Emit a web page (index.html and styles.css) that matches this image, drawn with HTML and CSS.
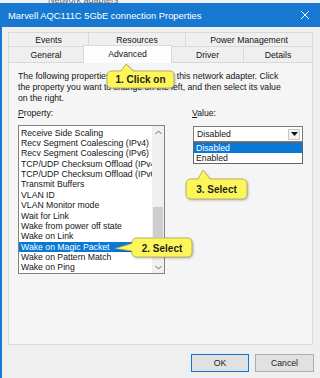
FILE: index.html
```html
<!DOCTYPE html>
<html lang="en">
  <head>
    <meta charset="UTF-8" />
    <title>Marvell AQC111C 5GbE connection Properties</title>
    <link rel="stylesheet" href="styles.css">
  </head>
  <body>
    <div class="backdrop"><span class="behind-text">Network adapters</span></div>
    <div class="window">
      <div class="titlebar">
        <span class="title">Marvell AQC111C 5GbE connection Properties</span>
        <svg class="close" width="10" height="10" viewBox="0 0 10 10">
          <path d="M1 1L9 9M9 1L1 9" stroke="#fff" stroke-width="1" fill="none" />
        </svg>
      </div>
      <div class="client">
        <div class="tabs">
          <div class="tab-row">
            <div class="tab t-events">Events</div>
            <div class="tab t-resources">Resources</div>
            <div class="tab t-power last">Power Management</div>
          </div>
          <div class="tab-row">
            <div class="tab t-general">General</div>
            <div class="tab t-advanced active">Advanced</div>
            <div class="tab t-driver">Driver</div>
            <div class="tab t-details last">Details</div>
          </div>
        </div>
        <div class="panel">
          <p class="desc">
            The following properties are available for this network adapter. Click<br />
            the property you want to change on the left, and then select its value<br />
            on the right.
          </p>
          <div class="fields">
            <div class="field prop">
              <div class="label"><u>P</u>roperty:</div>
              <div class="listbox">
                <ul class="items">
                  <li>Receive Side Scaling</li>
                  <li>Recv Segment Coalescing (IPv4)</li>
                  <li>Recv Segment Coalescing (IPv6)</li>
                  <li>TCP/UDP Checksum Offload (IPv4)</li>
                  <li>TCP/UDP Checksum Offload (IPv6)</li>
                  <li>Transmit Buffers</li>
                  <li>VLAN ID</li>
                  <li>VLAN Monitor mode</li>
                  <li>Wait for Link</li>
                  <li>Wake from power off state</li>
                  <li>Wake on Link</li>
                  <li class="selected">Wake on Magic Packet</li>
                  <li>Wake on Pattern Match</li>
                  <li>Wake on Ping</li>
                </ul>
                <div class="scrollbar">
                  <div class="arrow">
                    <svg width="7" height="5" viewBox="0 0 7 5"><path d="M0.5 4L3.5 1L6.5 4" stroke="#6d6d6d" fill="none" /></svg>
                  </div>
                  <div class="track"><div class="thumb"></div></div>
                  <div class="arrow">
                    <svg width="7" height="5" viewBox="0 0 7 5"><path d="M0.5 1L3.5 4L6.5 1" stroke="#6d6d6d" fill="none" /></svg>
                  </div>
                </div>
              </div>
            </div>
            <div class="field value">
              <div class="label"><u>V</u>alue:</div>
              <div class="combo">
                <span>Disabled</span>
                <span class="drop-btn">
                  <svg width="7" height="4" viewBox="0 0 7 4"><path d="M0 0H7L3.5 4Z" fill="#111" /></svg>
                </span>
              </div>
              <ul class="droplist">
                <li class="selected">Disabled</li>
                <li>Enabled</li>
              </ul>
            </div>
          </div>
        </div>
        <div class="buttons">
          <button class="btn default">OK</button>
          <button class="btn">Cancel</button>
        </div>
      </div>
    </div>

    <!-- tutorial callouts drawn over the dialog -->
    <svg class="callouts" width="320" height="378" viewBox="0 0 320 378">
      <g class="bubble">
        <path d="M112 71H121L126 64L133 71H169Q174 71 174 76V83Q174 88 169 88H112Q107 88 107 83V76Q107 71 112 71Z" />
        <text x="140.5" y="83.2">1. Click on</text>
      </g>
      <g class="bubble">
        <path d="M191 179H198L203 170L210 179H242Q247 179 247 184V194Q247 199 242 199H191Q186 199 186 194V184Q186 179 191 179Z" />
        <text x="216.5" y="193">3. Select</text>
      </g>
      <g class="bubble">
        <path d="M137 238H187Q192 238 192 243V252Q192 257 187 257H137Q132 257 132 252V251L115 248.5L132 243.5V243Q132 238 137 238Z" />
        <text x="162" y="251.5">2. Select</text>
      </g>
    </svg>
  </body>
</html>
```

FILE: styles.css
```css
* {
  box-sizing: border-box;
}

body {
  margin: 0;
  width: 320px;
  height: 378px;
  overflow: hidden;
  position: relative;
  font-family: "Liberation Sans", Arial, sans-serif;
  font-size: 8.7px;
  color: #141414;
  background-color: #efefef;
}

.backdrop {
  height: 3px;
  overflow: hidden;
  background-color: #f3f3f3;
  padding-left: 48px;
}

.behind-text {
  display: block;
  font-size: 9px;
  line-height: 6px;
  margin-top: -3px;
  color: #666;
}

.window {
  height: 375px;
  border-left: 2px solid #1878d0;
}

.titlebar {
  height: 24px;
  background-color: #1778d2;
  color: #ffffff;
  display: flex;
  align-items: center;
  justify-content: space-between;
  padding: 0 10px 0 6px;
  font-size: 9.4px;
}

.client {
  padding: 5px 7px 0 6px;
}

/* tabs */
.tab-row {
  display: flex;
  height: 14px;
}

.tab-row + .tab-row {
  height: 16px;
}

.tab {
  border-top: 1px solid #d9d9d9;
  border-left: 1px solid #d9d9d9;
  background-color: #efefef;
  display: flex;
  align-items: center;
  justify-content: center;
}

.tab.last {
  border-right: 1px solid #d9d9d9;
}

.t-events { width: 80px; }
.t-resources { width: 97px; }
.t-power { width: 128px; }
.t-general { width: 75px; }
.t-advanced { width: 89px; }
.t-driver { width: 71px; }
.t-details { width: 70px; }

.tab.active {
  background-color: #fdfdfd;
  border-right: 1px solid #d9d9d9;
  margin-top: -1px;
  height: 18px;
  position: relative;
  z-index: 1;
  padding-bottom: 2px;
}

.tab.active + .tab {
  border-left: none;
}

/* tab page */
.panel {
  height: 283px;
  border: 1px solid #d9d9d9;
  background-color: #f5f5f5;
  padding: 8px 9px 0 9px;
}

.desc {
  margin: 0;
  line-height: 11px;
}

.fields {
  display: flex;
  margin-top: 4px;
}

.label {
  line-height: 11px;
}

.prop {
  width: 147px;
}

.value {
  width: 111px;
  margin-left: 27px;
}

.listbox {
  margin-top: 6px;
  height: 149px;
  border: 1px solid #828282;
  background-color: #ffffff;
  display: flex;
}

.items {
  flex: 1;
  min-width: 0;
  margin: 0;
  padding: 1.5px 0 0 0;
  list-style: none;
  overflow: hidden;
}

.items li {
  height: 10.38px;
  line-height: 10.38px;
  padding-left: 2px;
  white-space: nowrap;
}

.items li.selected,
.droplist li.selected {
  background-color: #0a78d7;
  color: #ffffff;
}

.scrollbar {
  width: 12px;
  background-color: #f0f0f0;
  display: flex;
  flex-direction: column;
}

.arrow {
  height: 12px;
  display: flex;
  align-items: center;
  justify-content: center;
}

.track {
  flex: 1;
}

.thumb {
  margin: 69px 1px 0 1px;
  height: 30px;
  background-color: #cdcdcd;
}

.combo {
  margin: 7px 0 0 1px;
  height: 16px;
  border: 1px solid #7a7a7a;
  background-color: #ffffff;
  display: flex;
  align-items: center;
  justify-content: space-between;
  padding: 0 2px 0 3px;
}

.drop-btn {
  width: 12px;
  height: 11px;
  border: 1px solid #c6c6c6;
  background-color: #f4f4f4;
  display: flex;
  align-items: center;
  justify-content: center;
}

.droplist {
  margin: 0 0 0 1px;
  padding: 0;
  list-style: none;
  border: 1px solid #646464;
  background-color: #ffffff;
}

.droplist li {
  height: 10px;
  line-height: 10px;
  padding-left: 2px;
}

/* dialog buttons */
.buttons {
  display: flex;
  justify-content: flex-end;
  gap: 6px;
  margin: 9px -1px 0 0;
}

.btn {
  width: 59px;
  height: 18px;
  padding: 0;
  font-family: inherit;
  font-size: 8.7px;
  color: #1b1b1b;
  background-color: #e1e1e1;
  border: 1px solid #adadad;
}

.btn.default {
  width: 58px;
  border-color: #0a78d7;
}

/* callouts */
.callouts {
  position: absolute;
  left: 0;
  top: 0;
  pointer-events: none;
}

.bubble path {
  fill: #fdf65a;
  stroke: #aaa55a;
  stroke-width: 0.8;
  filter: drop-shadow(1px 1px 1px rgba(0, 0, 0, 0.25));
}

.bubble text {
  font-family: "Liberation Sans", Arial, sans-serif;
  font-weight: bold;
  font-size: 10px;
  fill: #1e1e1e;
  text-anchor: middle;
}
```
